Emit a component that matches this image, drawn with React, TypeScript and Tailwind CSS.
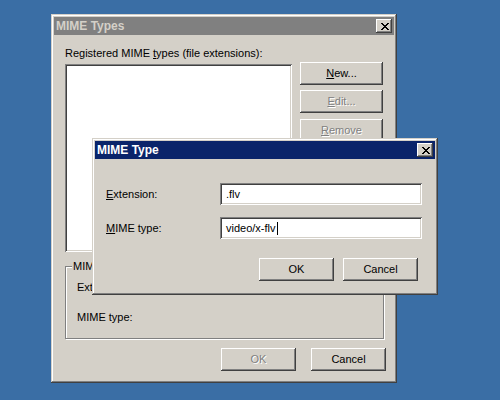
import React, { FC, ReactNode } from "react";

const raised =
  "shadow-[inset_-1px_-1px_#404040,inset_1px_1px_#ffffff,inset_-2px_-2px_#808080,inset_2px_2px_#d4d0c8]";
const windowEdge =
  "shadow-[inset_-1px_-1px_#404040,inset_1px_1px_#d4d0c8,inset_-2px_-2px_#808080,inset_2px_2px_#ffffff]";
const sunken =
  "shadow-[inset_1px_1px_#808080,inset_-1px_-1px_#ffffff,inset_2px_2px_#404040,inset_-2px_-2px_#d4d0c8]";

const CloseGlyph: FC = () => (
  <svg width="8" height="7" viewBox="0 0 8 7" shapeRendering="crispEdges">
    <path
      d="M0 0h2v1H0zM6 0h2v1H6zM1 1h2v1H1zM5 1h2v1H5zM2 2h4v1H2zM3 3h2v1H3zM2 4h4v1H2zM1 5h2v1H1zM5 5h2v1H5zM0 6h2v1H0zM6 6h2v1H6z"
      fill="#000"
    />
  </svg>
);

interface TitleProps {
  title: string;
  active?: boolean;
}

const TitleBar: FC<TitleProps> = ({ title, active }) => (
  <div
    className={
      active
        ? "h-[18px] flex items-center justify-between bg-[#0a246a] pl-[2px] pr-[2px]"
        : "h-[18px] flex items-center justify-between bg-[#808080] pl-[2px] pr-[2px]"
    }
  >
    <span
      className={
        active
          ? "text-[12px] font-bold text-white leading-[18px]"
          : "text-[12px] font-bold text-[#d4d0c8] leading-[18px]"
      }
    >
      {title}
    </span>
    <div
      className={`w-[16px] h-[14px] bg-[#d4d0c8] flex items-center justify-center pl-[1px] ${raised}`}
    >
      <CloseGlyph />
    </div>
  </div>
);

interface BtnProps {
  children: ReactNode;
  disabled?: boolean;
  className?: string;
}

const Button: FC<BtnProps> = ({ children, disabled, className = "" }) => (
  <div
    className={`h-[23px] flex items-center justify-center bg-[#d4d0c8] text-[11px] ${raised} ${className} ${
      disabled ? "text-[#808080] [text-shadow:1px_1px_0_#ffffff]" : "text-black"
    }`}
  >
    {children}
  </div>
);

const Field: FC<{ value: string; caret?: boolean }> = ({ value, caret }) => (
  <div
    className={`w-[202px] h-[22px] bg-white flex items-center pl-[6px] text-[11px] text-black ${sunken}`}
  >
    <span>{value}</span>
    {caret && <span className="w-[1px] h-[13px] bg-black ml-[1px]" />}
  </div>
);

export default function App() {
  return (
    <div className="relative w-[500px] h-[400px] bg-[#3a6ea5] overflow-hidden font-['Liberation_Sans',Arial,sans-serif] text-[11px] text-black">
      {/* MIME Types window (inactive) */}
      <div
        className={`absolute left-[51px] top-[14px] w-[346px] h-[369px] bg-[#d4d0c8] p-[3px] flex flex-col ${windowEdge}`}
      >
        <TitleBar title="MIME Types" />
        <div className="flex flex-col px-[11px]">
          <div className="mt-[12px] leading-[13px]">
            Registered MIME <u>t</u>ypes (file extensions):
          </div>
          <div className="mt-[2px] flex gap-[8px]">
            <div className={`mt-[2px] w-[227px] h-[188px] bg-white ${sunken}`} />
            <div className="flex flex-col w-[83px]">
              <Button>
                <u>N</u>ew...
              </Button>
              <Button disabled className="mt-[5px]">
                <u>E</u>dit...
              </Button>
              <Button disabled className="mt-[6px]">
                <u>R</u>emove
              </Button>
            </div>
          </div>
          <div className="relative mt-[14px] w-[319px] h-[73px] border border-[#808080] shadow-[1px_1px_0_#ffffff,inset_1px_1px_0_#ffffff] flex flex-col pl-[11px]">
            <span className="absolute -top-[7px] left-[6px] px-[1px] bg-[#d4d0c8] leading-[13px]">
              MIME type details
            </span>
            <div className="mt-[14px] leading-[13px]">Extension:</div>
            <div className="mt-[17px] leading-[13px]">MIME type:</div>
          </div>
          <div className="mt-[9px] flex justify-end gap-[15px] -mr-[3px]">
            <Button disabled className="w-[75px]">
              OK
            </Button>
            <Button className="w-[75px]">Cancel</Button>
          </div>
        </div>
      </div>

      {/* MIME Type dialog (active) */}
      <div
        className={`absolute left-[92px] top-[138px] w-[346px] h-[157px] bg-[#d4d0c8] p-[3px] flex flex-col ${windowEdge}`}
      >
        <TitleBar title="MIME Type" active />
        <div className="flex flex-col px-[11px]">
          <div className="mt-[24px] flex items-center">
            <span className="w-[114px]">
              <u>E</u>xtension:
            </span>
            <Field value=".flv" />
          </div>
          <div className="mt-[12px] flex items-center">
            <span className="w-[114px]">
              <u>M</u>IME type:
            </span>
            <Field value="video/x-flv" caret />
          </div>
          <div className="mt-[19px] flex gap-[9px] ml-[153px]">
            <Button className="w-[75px]">OK</Button>
            <Button className="w-[75px]">Cancel</Button>
          </div>
        </div>
      </div>
    </div>
  );
}
